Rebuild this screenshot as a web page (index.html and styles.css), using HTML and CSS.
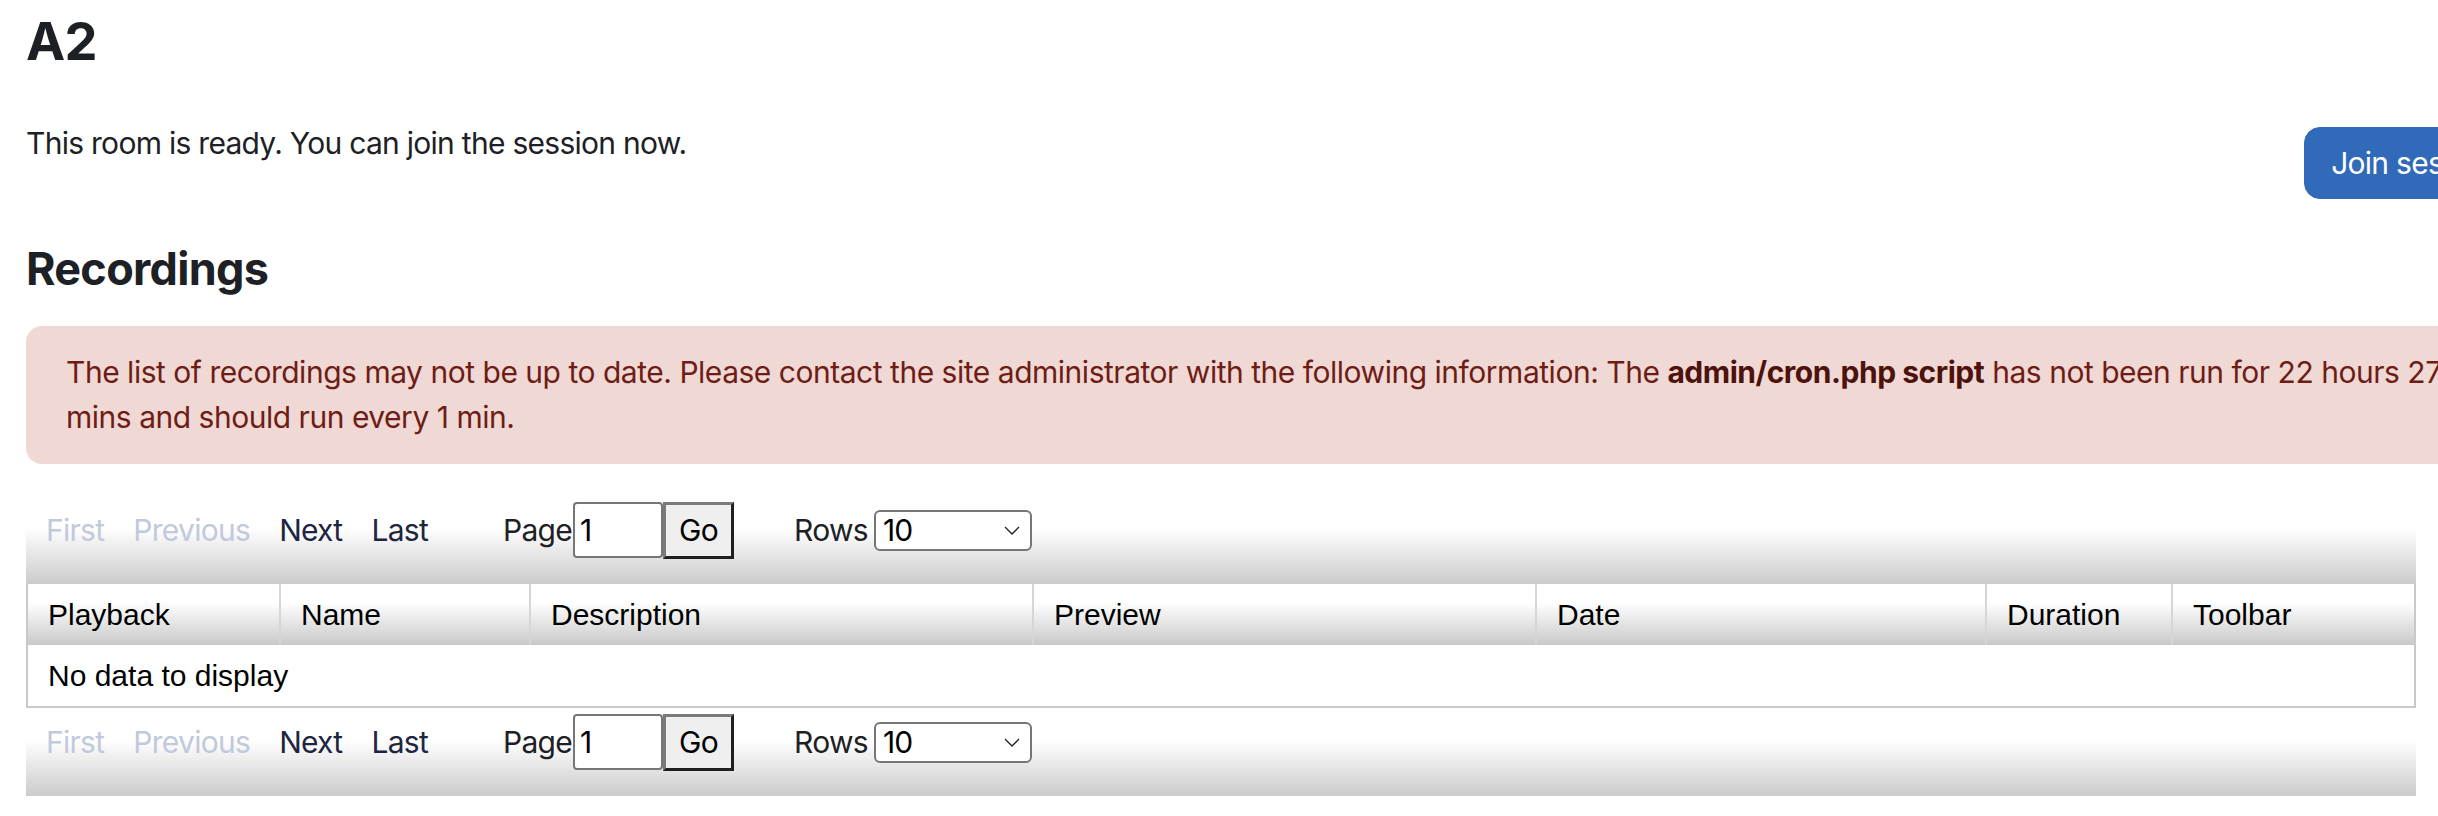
FILE: index.html
```html
<!DOCTYPE html>
<html lang="en">
<head>
<meta charset="utf-8">
<title>A2</title>
<link rel="stylesheet" href="styles.css">
</head>
<body>
<div class="page">
  <h2 class="title">A2</h2>
  <div class="room-row">
    <p class="room-status">This room is ready. You can join the session now.</p>
    <button class="btn-join" type="button">Join session</button>
  </div>
  <h3 class="section-title">Recordings</h3>
  <div class="alert">The list of recordings may not be up to date. Please contact the site administrator with the following information: The <b class="alert-link">admin/cron.php script</b> has not been run for 22 hours 27<br>mins and should run every 1 min.</div>

  <div class="datatable">
    <div class="pager">
      <span class="pg-link disabled">First</span>
      <span class="pg-link disabled">Previous</span>
      <span class="pg-link">Next</span>
      <span class="pg-link last">Last</span>
      <label class="pg-label">Page</label><input class="pg-input" type="text" value="1"><button class="pg-go" type="button">Go</button>
      <label class="pg-label rows">Rows</label>
      <select class="pg-select"><option>10</option></select>
    </div>
    <table class="grid">
      <colgroup>
        <col class="c1"><col class="c2"><col class="c3"><col class="c4"><col class="c5"><col class="c6"><col class="c7">
      </colgroup>
      <thead>
        <tr>
          <th>Playback</th><th>Name</th><th>Description</th><th>Preview</th><th>Date</th><th>Duration</th><th>Toolbar</th>
        </tr>
      </thead>
      <tbody>
        <tr><td colspan="7">No data to display</td></tr>
      </tbody>
    </table>
    <div class="pager">
      <span class="pg-link disabled">First</span>
      <span class="pg-link disabled">Previous</span>
      <span class="pg-link">Next</span>
      <span class="pg-link last">Last</span>
      <label class="pg-label">Page</label><input class="pg-input" type="text" value="1"><button class="pg-go" type="button">Go</button>
      <label class="pg-label rows">Rows</label>
      <select class="pg-select"><option>10</option></select>
    </div>
  </div>
</div>
</body>
</html>
```
FILE: styles.css
```css
html, body {
  margin: 0;
  padding: 0;
  overflow: hidden;
  background: #fff;
}

body {
  font-family: "Inter", "Roboto", sans-serif;
  font-size: 30px;
  line-height: 1.5;
  letter-spacing: -0.024em;
  color: #1d2125;
}

.page {
  width: 2500px;
  padding: 10px 0 0 26px;
}

.title {
  margin: 0;
  font-size: 52.5px;
  line-height: 1.2;
  font-weight: 700;
}

.room-row {
  display: flex;
  justify-content: space-between;
  align-items: flex-start;
  margin-top: 48px;
}

.room-status {
  margin: 0;
}

.btn-join {
  margin-top: 6px;
  padding: 13px 26px;
  border: 1px solid #316ab9;
  border-radius: 16px;
  background: #316ab9;
  color: #fff;
  font: inherit;
  letter-spacing: inherit;
  line-height: 44px;
  white-space: nowrap;
}

.section-title {
  margin: 43px 0 30px;
  font-size: 45px;
  line-height: 1.2;
  font-weight: 700;
}

.alert {
  padding: 24px 40px;
  border-radius: 16px;
  background: #f0d8d5;
  color: #6e1d15;
  margin-bottom: 32px;
  white-space: nowrap;
  letter-spacing: -0.016em;
}

.alert-link {
  color: #4d120c;
  font-weight: 700;
}

.datatable {
  width: 2390px;
}

.pager {
  display: flex;
  align-items: baseline;
  padding: 6px 20px 25px;
  background: linear-gradient(to bottom, #fff 0, #fff 36%, #cbcbcb 100%);
  color: #1d2125;
}

.pg-link {
  margin-right: 29px;
  color: #1d2540;
}

.pg-link.disabled {
  color: #c1c9dc;
}

.pg-link.last {
  margin-right: 75px;
}

.pg-label {
  margin-right: 1px;
}

.pg-label.rows {
  margin-left: 60px;
  margin-right: 6px;
}

.pg-input {
  box-sizing: border-box;
  width: 90px;
  height: 56px;
  padding: 0 5px;
  border: 2px solid #767676;
  border-radius: 4px;
  font: inherit;
  letter-spacing: inherit;
  color: #000;
}

.pg-go {
  box-sizing: border-box;
  width: 71px;
  height: 57px;
  padding: 0;
  border-style: solid;
  border-width: 3px;
  border-color: #7a7a7a #1f1f1f #1f1f1f #7a7a7a;
  background: #efefef;
  font: inherit;
  letter-spacing: inherit;
  color: #000;
}

.pg-select {
  box-sizing: border-box;
  width: 158px;
  height: 41px;
  padding: 0 0 0 7px;
  border: 2px solid #767676;
  border-radius: 6px;
  background: #fff url("data:image/svg+xml,%3Csvg xmlns='http://www.w3.org/2000/svg' width='16' height='9' viewBox='0 0 16 9'%3E%3Cpath d='M1 1l7 7 7-7' fill='none' stroke='%23222' stroke-width='1.3'/%3E%3C/svg%3E") no-repeat right 10px center;
  -webkit-appearance: none;
  appearance: none;
  font: inherit;
  letter-spacing: inherit;
  line-height: 37px;
  color: #000;
}

.grid {
  width: 2390px;
  table-layout: fixed;
  border-collapse: separate;
  border-spacing: 0;
  border-left: 2px solid #c9c9c9;
  border-right: 2px solid #c9c9c9;
  font-family: "Liberation Sans", Arial, sans-serif;
  font-size: 30px;
  line-height: 45px;
  letter-spacing: 0;
  color: #000;
}

.c1 { width: 253px; }
.c2 { width: 250px; }
.c3 { width: 503px; }
.c4 { width: 503px; }
.c5 { width: 450px; }
.c6 { width: 186px; }
.c7 { width: 241px; }

.grid th {
  padding: 8px 20px;
  text-align: left;
  font-weight: 400;
  border-right: 2px solid #d6d6d6;
  background: linear-gradient(to bottom, #fff 0, #fff 30%, #c9c9c9 100%);
}

.grid th:last-child {
  border-right: 0;
}

.grid td {
  padding: 8px 20px;
  border-bottom: 2px solid #c9c9c9;
  background: #fff;
}
```
